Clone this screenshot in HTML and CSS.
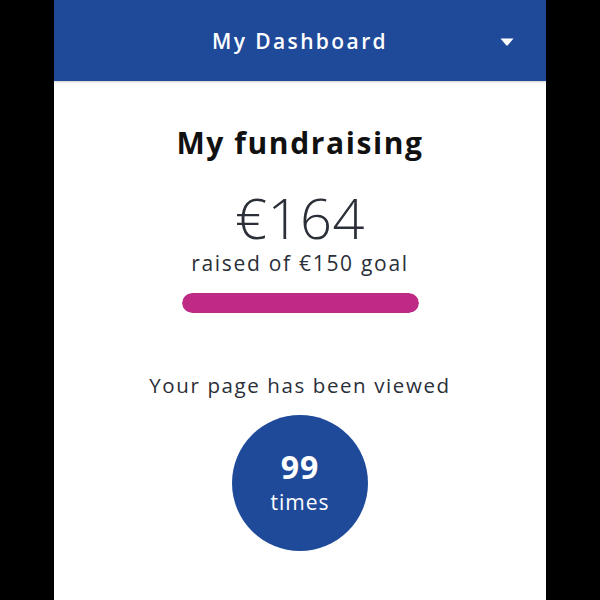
FILE: index.html
```html
<!DOCTYPE html>
<html lang="en">
<head>
    <meta charset="UTF-8">
    <meta name="viewport" content="width=device-width, initial-scale=1.0">
    <title>My Dashboard</title>
    <link rel="stylesheet" href="styles.css">
</head>
<body>
    <div class="page">
        <!-- Header bar -->
        <div class="header">
            <span class="header-title">My Dashboard</span>
            <svg class="caret" width="14" height="8" viewBox="0 0 14 8">
                <path d="M0.5 0.5 H13.5 L7.8 7.2 Q7 8 6.2 7.2 Z" fill="#fff"/>
            </svg>
        </div>

        <!-- Fundraising summary -->
        <div class="content">
            <h1 class="title">My fundraising</h1>
            <div class="amount">€164</div>
            <div class="goal">raised of €150 goal</div>
            <div class="progress">
                <div class="progress-fill" style="width: 100%;"></div>
            </div>

            <p class="views-label">Your page has been viewed</p>
            <div class="views-circle">
                <span class="views-count">99</span>
                <span class="views-unit">times</span>
            </div>
        </div>
    </div>
</body>
</html>
```

FILE: styles.css
```css
/* Basic styling */
body {
    font-family: "Open Sans", "DejaVu Sans", sans-serif;
    margin: 0;
    padding: 0;
    background-color: #000;
}
.page {
    width: 492px;
    height: 600px;
    margin: 0 auto;
    background-color: #fff;
}
.header {
    position: relative;
    height: 81px;
    background-color: #1f4a9a;
    box-shadow: 0 1px 2px rgba(0, 0, 0, 0.2);
    display: flex;
    justify-content: center;
    align-items: center;
}
.header-title {
    color: #fff;
    font-size: 21px;
    font-weight: 600;
    letter-spacing: 2.4px;
}
.caret {
    position: absolute;
    right: 32px;
    top: 38px;
}
.content {
    display: flex;
    flex-direction: column;
    align-items: center;
    padding-top: 41px;
    color: #2b2f38;
}
.title {
    margin: 0;
    font-size: 30px;
    font-weight: 700;
    letter-spacing: 1.6px;
    color: #111;
}
.amount {
    margin-top: 26px;
    font-size: 56px;
    font-weight: 300;
    line-height: 56px;
    letter-spacing: 0.5px;
}
.goal {
    margin-top: 4px;
    font-size: 21px;
    font-weight: 400;
    letter-spacing: 1.7px;
}
.progress {
    width: 237px;
    height: 20px;
    margin-top: 16px;
    border-radius: 10px;
    background-color: #eee;
    overflow: hidden;
}
.progress-fill {
    height: 100%;
    background-color: #c02a87;
    border-radius: 10px;
}
.views-label {
    margin: 58px 0 0;
    font-size: 20.5px;
    font-weight: 400;
    letter-spacing: 1.6px;
}
.views-circle {
    width: 136px;
    height: 136px;
    margin-top: 16px;
    border-radius: 50%;
    background-color: #1f4a9a;
    color: #fff;
    display: flex;
    flex-direction: column;
    align-items: center;
    justify-content: center;
}
.views-count {
    font-size: 32px;
    font-weight: 700;
    line-height: 38px;
    letter-spacing: 1px;
}
.views-unit {
    font-size: 21px;
    line-height: 32px;
    letter-spacing: 1px;
}
```
